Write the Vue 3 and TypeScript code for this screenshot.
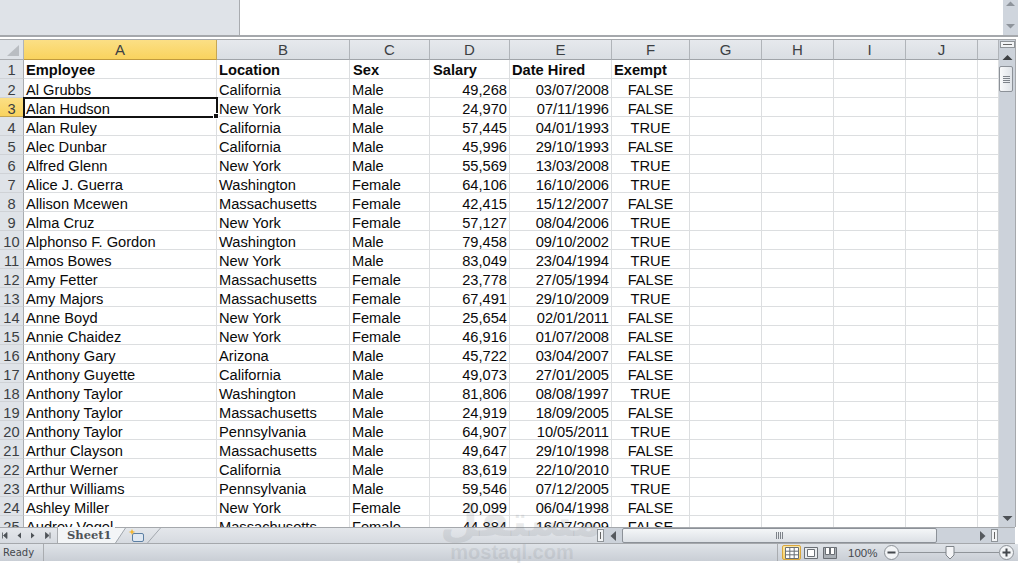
<script setup lang="ts">
const columns: string[] = ['A', 'B', 'C', 'D', 'E', 'F', 'G', 'H', 'I', 'J', '']

const header: string[] = ['Employee', 'Location', 'Sex', 'Salary', 'Date Hired', 'Exempt']

// name, location, sex, salary, hired, exempt
const rows: string[][] = [
  ['Al Grubbs', 'California', 'Male', '49,268', '03/07/2008', 'FALSE'],
  ['Alan Hudson', 'New York', 'Male', '24,970', '07/11/1996', 'FALSE'],
  ['Alan Ruley', 'California', 'Male', '57,445', '04/01/1993', 'TRUE'],
  ['Alec Dunbar', 'California', 'Male', '45,996', '29/10/1993', 'FALSE'],
  ['Alfred Glenn', 'New York', 'Male', '55,569', '13/03/2008', 'TRUE'],
  ['Alice J. Guerra', 'Washington', 'Female', '64,106', '16/10/2006', 'TRUE'],
  ['Allison Mcewen', 'Massachusetts', 'Female', '42,415', '15/12/2007', 'FALSE'],
  ['Alma Cruz', 'New York', 'Female', '57,127', '08/04/2006', 'TRUE'],
  ['Alphonso F. Gordon', 'Washington', 'Male', '79,458', '09/10/2002', 'TRUE'],
  ['Amos Bowes', 'New York', 'Male', '83,049', '23/04/1994', 'TRUE'],
  ['Amy Fetter', 'Massachusetts', 'Female', '23,778', '27/05/1994', 'FALSE'],
  ['Amy Majors', 'Massachusetts', 'Female', '67,491', '29/10/2009', 'TRUE'],
  ['Anne Boyd', 'New York', 'Female', '25,654', '02/01/2011', 'FALSE'],
  ['Annie Chaidez', 'New York', 'Female', '46,916', '01/07/2008', 'FALSE'],
  ['Anthony Gary', 'Arizona', 'Male', '45,722', '03/04/2007', 'FALSE'],
  ['Anthony Guyette', 'California', 'Male', '49,073', '27/01/2005', 'FALSE'],
  ['Anthony Taylor', 'Washington', 'Male', '81,806', '08/08/1997', 'TRUE'],
  ['Anthony Taylor', 'Massachusetts', 'Male', '24,919', '18/09/2005', 'FALSE'],
  ['Anthony Taylor', 'Pennsylvania', 'Male', '64,907', '10/05/2011', 'TRUE'],
  ['Arthur Clayson', 'Massachusetts', 'Male', '49,647', '29/10/1998', 'FALSE'],
  ['Arthur Werner', 'California', 'Male', '83,619', '22/10/2010', 'TRUE'],
  ['Arthur Williams', 'Pennsylvania', 'Male', '59,546', '07/12/2005', 'TRUE'],
  ['Ashley Miller', 'New York', 'Female', '20,099', '06/04/1998', 'FALSE'],
  ['Audrey Vogel', 'Massachusetts', 'Female', '44,884', '16/07/2009', 'FALSE']
]

const emptyCells: number[] = [6, 7, 8, 9, 10]
const alignOf = (i: number): string => (i === 3 || i === 4 ? 'right' : i === 5 ? 'center' : '')
</script>

<template>
  <div class="excel">
    <div class="formula-bar">
      <div class="name-box"></div>
      <div class="formula-input"></div>
      <div class="formula-scroll">
        <svg width="15" height="35" viewBox="0 0 15 35">
          <path d="M3 6 7.500 1.500 12 6z" fill="#8e949b" />
          <path d="M3 24h9l-4.500 4.500z" fill="#8e949b" />
        </svg>
      </div>
    </div>

    <div class="main">
      <div class="sheet">
        <div class="row head-row">
          <div class="corner"><span class="corner-tri"></span></div>
          <div
            v-for="(c, i) in columns"
            :key="i"
            class="col-head"
            :class="{ selected: c === 'A' }"
          >{{ c }}</div>
        </div>

        <div class="row">
          <div class="row-head">1</div>
          <div
            v-for="(h, i) in header"
            :key="h"
            class="cell bold"
            :class="{ nudge: i === 2 || i === 3 }"
          >{{ h }}</div>
          <div v-for="n in emptyCells" :key="n" class="cell"></div>
        </div>

        <div v-for="(r, ri) in rows" :key="ri" class="row data-row">
          <div class="row-head" :class="{ selected: ri === 1 }">{{ ri + 2 }}</div>
          <div
            v-for="(v, i) in r"
            :key="i"
            class="cell"
            :class="[alignOf(i), { active: ri === 1 && i === 0 }]"
          >{{ v }}</div>
          <div v-for="n in emptyCells" :key="n" class="cell"></div>
        </div>
      </div>

      <div class="vscroll">
        <div class="split-v"><span></span></div>
        <svg class="arrow-up" width="11" height="5" viewBox="0 0 11 5"><path d="M0.500 5 5.500 0 10.500 5z" fill="#3d4043" /></svg>
        <div class="v-thumb"><i></i><i></i><i></i><i></i></div>
        <div class="v-track"></div>
        <svg class="arrow-down" width="11" height="5" viewBox="0 0 11 5"><path d="M0.500 0 10.500 0 5.500 5z" fill="#4d5156" /></svg>
      </div>
    </div>

    <div class="tab-bar">
      <div class="tab-nav">
        <svg width="54" height="15" viewBox="0 0 54 15">
          <path d="M2.500 4.500v6M7 4.500 3.500 7.500 7 10.500z" fill="#4d5257" stroke="#4d5257" stroke-width=".8" />
          <path d="M21 4.500 17.500 7.500 21 10.500z" fill="#4d5257" />
          <path d="M31 4.500l3.500 3-3.500 3z" fill="#4d5257" />
          <path d="M45.500 4.500l3.500 3-3.500 3zM50 4.500v6" fill="#4d5257" stroke="#4d5257" stroke-width=".8" />
        </svg>
      </div>
      <div class="tab">Sheet1</div>
      <svg class="new-tab" width="46" height="15" viewBox="0 0 46 15">
        <path d="M0 15 10 0H0z" fill="#f3f5f7" />
        <path d="M0.500 15 10.500 0M32.500 15 45.500 0" stroke="#a3a8ae" fill="none" />
        <rect x="17.500" y="5.500" width="11" height="8" rx="1.500" fill="#dfe8f2" stroke="#5c7fa3" />
        <path d="M17 1l1 2.200 2.400.8-2.400.8-1 2.200-1-2.200-2.400-.8 2.400-.8z" fill="#f2b632" />
      </svg>
      <div class="tab-fill"></div>
      <div class="split-h"><span></span></div>
      <div class="hscroll">
        <svg width="7" height="10" viewBox="0 0 7 10"><path d="M6 0v10L0.500 5z" fill="#55595e" /></svg>
        <div class="h-thumb"><i></i><i></i><i></i><i></i></div>
        <div class="h-track"></div>
        <svg width="7" height="10" viewBox="0 0 7 10"><path d="M1 0v10L6.500 5z" fill="#55595e" /></svg>
        <div class="split-h end"><span></span></div>
      </div>
    </div>

    <div class="status-bar">
      <div class="ready">Ready</div>
      <div class="status-fill"></div>
      <div class="views">
        <div class="view on">
          <svg width="14" height="12" viewBox="0 0 14 12">
            <path d="M.5.500h13v11H.5zM.5 4.200h13M.5 7.800h13M4.800.500v11M9.200.500v11" fill="#fff" stroke="#6a6f75" />
          </svg>
        </div>
        <div class="view">
          <svg width="14" height="12" viewBox="0 0 14 12">
            <path d="M.5.500h13v11H.5z" fill="#e9ecef" stroke="#6a6f75" />
            <path d="M3.500 2.500h7v7h-7z" fill="#fff" stroke="#6a6f75" />
          </svg>
        </div>
        <div class="view">
          <svg width="14" height="12" viewBox="0 0 14 12">
            <path d="M.5.500h13v11H.5z" fill="#aab0b6" stroke="#6a6f75" />
            <path d="M2.500.500h4v7h-4zM7.500.500h4v7h-4z" fill="#fff" stroke="#6a6f75" />
          </svg>
        </div>
      </div>
      <div class="zoom-label">100%</div>
      <div class="zoom-btn">
        <svg width="15" height="15" viewBox="0 0 15 15">
          <circle cx="7.500" cy="7.500" r="7" fill="#f2f4f6" stroke="#8b9096" />
          <path d="M3.500 7.500h8" stroke="#44484d" stroke-width="2" />
        </svg>
      </div>
      <div class="zoom-slider">
        <div class="zoom-line"></div>
        <svg class="zoom-thumb" width="10" height="14" viewBox="0 0 10 14">
          <path d="M1 .500h8v8.500l-4 4-4-4z" fill="#f4f5f7" stroke="#7f848a" />
        </svg>
      </div>
      <div class="zoom-btn">
        <svg width="15" height="15" viewBox="0 0 15 15">
          <circle cx="7.500" cy="7.500" r="7" fill="#f2f4f6" stroke="#8b9096" />
          <path d="M3.500 7.500h8M7.500 3.500v8" stroke="#44484d" stroke-width="2" />
        </svg>
      </div>
    </div>

    <div class="watermark">
      <div class="wm-ar">مستقل</div>
      <div class="wm-en">mostaql.com</div>
    </div>
  </div>
</template>

<style scoped>
.excel {
  --cols: 24px 193px 133px 80px 80px 102px 78px 72px 72px 72px 72px 21px;
  position: relative;
  width: 1022px;
  height: 572px;
  padding-right: 4px;
  box-sizing: border-box;
  display: flex;
  flex-direction: column;
  background: #fff;
  font-family: "Liberation Sans", Arial, sans-serif;
  color: #0a0a0a;
  overflow: hidden;
}

/* formula bar */
.formula-bar {
  display: flex;
  height: 37px;
  flex: none;
  box-sizing: border-box;
  border-bottom: 2px solid #a5a8ac;
}
.name-box {
  width: 240px;
  box-sizing: border-box;
  background: #dfe3e8;
  border-right: 1px solid #a9acb0;
}
.formula-input {
  flex: 1;
  background: #fff;
}
.formula-scroll {
  width: 15px;
  background: #cfd5dd;
}

/* grid */
.main {
  display: flex;
  height: 490px;
  flex: none;
  box-sizing: border-box;
  border-top: 2px solid #fff;
  overflow: hidden;
}
.sheet {
  width: 999px;
  overflow: hidden;
  flex: none;
}
.row {
  display: grid;
  grid-template-columns: var(--cols);
  grid-template-rows: 19px;
  height: 19px;
}
.head-row {
  grid-template-rows: 20px;
  height: 21px;
  border-top: 1px solid #a5a8ac;
  box-sizing: border-box;
}
.corner {
  background: #dfe3e8;
  border-right: 1px solid #b0b4b9;
  border-bottom: 1px solid #a9acb0;
  position: relative;
}
.corner-tri {
  position: absolute;
  right: 4px;
  bottom: 3px;
  border-style: solid;
  border-width: 0 0 11px 12px;
  border-color: transparent transparent #b9bdc2 transparent;
}
.col-head {
  background: linear-gradient(#e6e9ed, #dadee3);
  border-right: 1px solid #b0b4b9;
  border-bottom: 1px solid #a0a4a9;
  text-align: center;
  font-size: 15px;
  line-height: 19px;
  color: #3c3f43;
}
.col-head.selected {
  background: linear-gradient(#fbdf85, #f9d35e);
  border-right-color: #c6a653;
  border-bottom-color: #c09a3e;
}
.row-head {
  background: #dfe3e8;
  border-right: 1px solid #a9acb0;
  border-bottom: 1px solid #cfd2d6;
  text-align: center;
  font-size: 14.67px;
  line-height: 20px;
  color: #3c3f43;
  overflow: hidden;
}
.row-head.selected {
  background: linear-gradient(#fbdf85, #f9d35e);
  border-bottom-color: #c6a653;
}
.cell {
  border-right: 1px solid #dcdee0;
  border-bottom: 1px solid #dcdee0;
  padding: 0 2px;
  font-size: 14.67px;
  line-height: 21px;
  white-space: nowrap;
  min-width: 0;
}
.data-row .row-head {
  line-height: 22px;
}
.data-row .cell {
  line-height: 23px;
}
.cell.bold {
  font-weight: 700;
}
.cell.nudge {
  padding-left: 3px;
}
.cell.right {
  text-align: right;
}
.cell.center {
  text-align: center;
}
.cell.active {
  position: relative;
  outline: 2px solid #111;
  outline-offset: -1px;
  z-index: 1;
}
.cell.active::after {
  content: "";
  position: absolute;
  right: -3px;
  bottom: -3px;
  width: 4px;
  height: 4px;
  background: #111;
  border: 1px solid #fff;
}

/* vertical scrollbar */
.vscroll {
  width: 17px;
  flex: none;
  background: #ccd2da;
  border-top: 1px solid #a5a8ac;
  border-right: 1px solid #a5a8ac;
  display: flex;
  flex-direction: column;
  align-items: center;
  box-sizing: border-box;
}
.split-v {
  width: 15px;
  height: 7px;
  margin-top: 1px;
  box-sizing: border-box;
  background: #f2f4f6;
  border: 1px solid #8f9499;
  display: flex;
  align-items: center;
  justify-content: center;
}
.split-v span {
  width: 9px;
  height: 1px;
  background: #666;
}
.arrow-up {
  margin-top: 7px;
  flex: none;
}
.v-thumb {
  width: 14px;
  height: 26px;
  margin: 6px 2px 0 0;
  flex: none;
  box-sizing: border-box;
  background: linear-gradient(90deg, #f8f9fa, #dfe3e8);
  border: 1px solid #8c9198;
  border-radius: 2px;
  display: flex;
  flex-direction: column;
  justify-content: center;
  align-items: center;
  gap: 1px;
}
.v-thumb i {
  width: 7px;
  height: 1px;
  background: #7d8289;
}
.v-track {
  flex: 1;
}
.arrow-down {
  margin-bottom: 6px;
  flex: none;
}

/* sheet tabs */
.tab-bar {
  height: 17px;
  width: 1015px;
  flex: none;
  box-sizing: border-box;
  display: flex;
  background: linear-gradient(#e4e7eb, #d6dae0);
  border-top: 1px solid #a5a8ac;
  border-bottom: 1px solid #a5a8ac;
}
.tab-nav {
  width: 57px;
  flex: none;
}
.tab {
  width: 58px;
  flex: none;
  box-sizing: border-box;
  margin-top: -1px;
  border-left: 1px solid #a9acb0;
  background: #f3f5f7;
  font-family: "DejaVu Serif", "Liberation Serif", serif;
  font-weight: 700;
  font-size: 11.500px;
  line-height: 16px;
  padding-left: 9px;
  color: #4f5357;
}
.new-tab {
  flex: none;
}
.tab-fill {
  flex: 1;
}
.split-h {
  width: 7px;
  height: 13px;
  margin-top: 1px;
  background: #f2f4f6;
  border: 1px solid #8f9499;
  box-sizing: border-box;
  display: flex;
  align-items: center;
  justify-content: center;
  flex: none;
}
.split-h span {
  width: 1px;
  height: 7px;
  background: #666;
}
.split-h.end {
  margin: 0 0 0 5px;
}
.hscroll {
  width: 411px;
  flex: none;
  display: flex;
  align-items: center;
  background: #ccd2da;
  padding: 0 17px 0 6px;
  box-sizing: border-box;
}
.h-thumb {
  width: 315px;
  height: 15px;
  margin-left: 5px;
  flex: none;
  box-sizing: border-box;
  background: linear-gradient(#f4f6f8, #dce0e5);
  border: 1px solid #8c9198;
  border-radius: 2px;
  display: flex;
  justify-content: center;
  align-items: center;
  gap: 1px;
}
.h-thumb i {
  width: 1px;
  height: 7px;
  background: #7d8289;
}
.h-track {
  flex: 1;
}

/* status bar */
.status-bar {
  height: 17px;
  flex: none;
  padding-right: 4px;
  display: flex;
  align-items: center;
  background: linear-gradient(#dfe3e8, #c9ced5);
  font-family: "DejaVu Sans", sans-serif;
  font-size: 10px;
  color: #44484d;
}
.ready {
  width: 44px;
  height: 17px;
  line-height: 18px;
  padding-left: 3px;
  box-sizing: border-box;
  border-right: 1px solid #a9acb0;
  flex: none;
}
.status-fill {
  flex: 1;
  height: 17px;
  box-sizing: border-box;
  border-right: 1px solid #a9acb0;
}
.views {
  display: flex;
  width: 56px;
  margin-left: 4px;
  gap: 1px;
  flex: none;
}
.view {
  width: 18px;
  height: 15px;
  display: flex;
  align-items: center;
  justify-content: center;
  flex: none;
}
.view.on {
  width: 19px;
  background: linear-gradient(#fde9a8, #f9cf63);
  border: 1px solid #d9a63c;
  border-radius: 2px;
  box-sizing: border-box;
}
.zoom-label {
  width: 36px;
  margin-left: 10px;
  flex: none;
  font-family: "Liberation Sans", sans-serif;
  font-size: 11.500px;
}
.zoom-btn {
  width: 15px;
  height: 15px;
  flex: none;
}
.zoom-slider {
  width: 100px;
  height: 15px;
  flex: none;
  display: flex;
  align-items: center;
  position: relative;
}
.zoom-line {
  height: 1px;
  width: 100%;
  background: #8f9499;
}
.zoom-thumb {
  position: absolute;
  left: 46px;
  top: 1px;
}

/* watermark */
.watermark {
  position: absolute;
  left: 440px;
  top: 500px;
  width: 144px;
  text-align: center;
  color: rgba(120, 125, 130, 0.17);
  font-family: "DejaVu Sans", sans-serif;
  font-weight: 700;
  pointer-events: none;
}
.wm-ar {
  font-size: 44px;
  line-height: 42px;
}
.wm-en {
  font-family: "Liberation Sans", sans-serif;
  font-size: 20px;
  line-height: 20px;
}
</style>

<style>
html,
body {
  margin: 0;
  background: #fff;
}
</style>
